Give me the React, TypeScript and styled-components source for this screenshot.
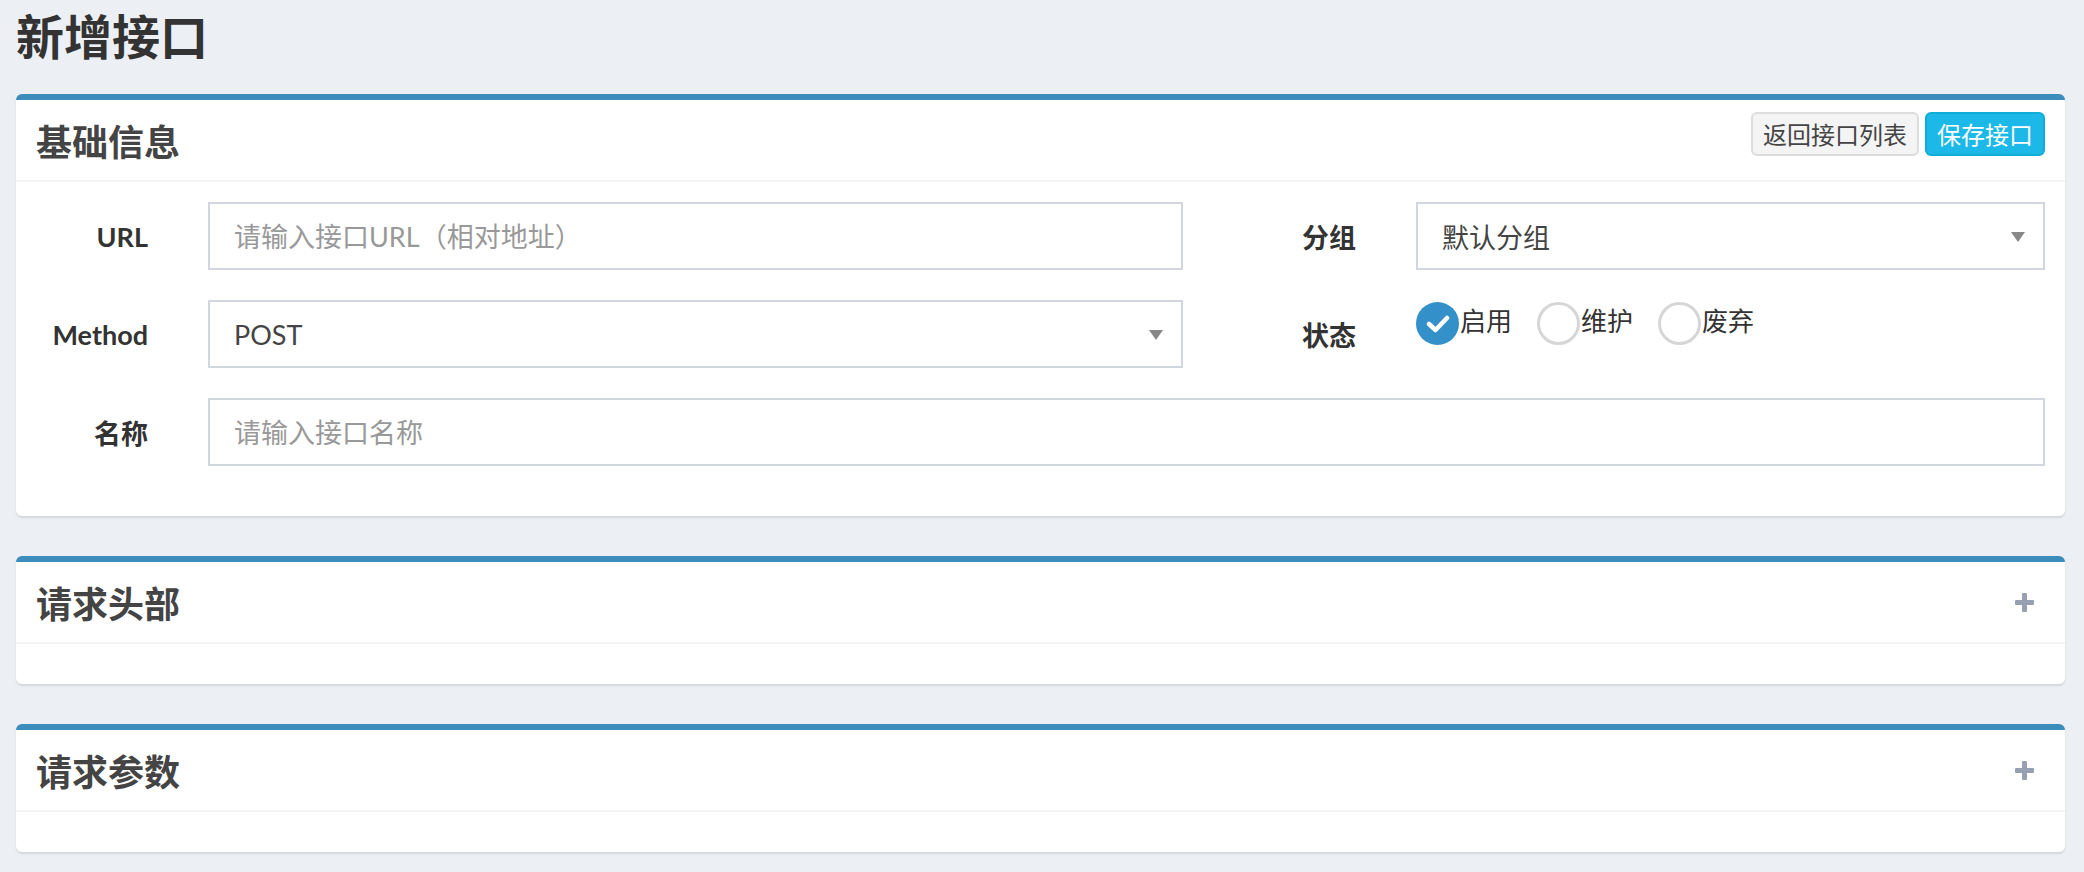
import React from "react";
import styled, { createGlobalStyle } from "styled-components";

const GlobalStyle = createGlobalStyle`
  html, body {
    margin: 0;
    padding: 0;
    background: #ecf0f5;
  }
  body {
    font-family: "Lato", "Noto Sans CJK SC", "Noto Sans", sans-serif;
    color: #333;
  }
  * { box-sizing: border-box; }
`;

const Page = styled.div`
  padding: 8px 19px 1px 16px;
  min-height: 872px;
  background: #ecf0f5;
`;

const PageTitle = styled.h1`
  margin: 0 0 33px;
  font-size: 48px;
  line-height: 53px;
  font-weight: 700;
  color: #333;
  font-family: "Noto Sans CJK SC", sans-serif;
`;

const Card = styled.section`
  background: #fff;
  border-top: 6px solid #3c8dbc;
  border-radius: 6px;
  box-shadow: 0 2px 2px rgba(0, 0, 0, 0.1);
  margin-bottom: 40px;
`;

const CardHeader = styled.div`
  display: flex;
  align-items: center;
  justify-content: space-between;
  height: 82px;
  padding: 0 20px;
  border-bottom: 2px solid #f4f4f4;
`;

const CardTitle = styled.h3`
  margin: 0;
  font-size: 36px;
  line-height: 1;
  font-weight: 700;
  color: #444;
  font-family: "Noto Sans CJK SC", sans-serif;
`;

const Tools = styled.div`
  display: flex;
  gap: 6px;
  align-self: flex-start;
  margin-top: 12px;
`;

const Button = styled.button<{ $variant?: "default" | "info" }>`
  height: 44px;
  padding: 0 10px;
  font-size: 24px;
  line-height: 1;
  font-family: "Noto Sans CJK SC", sans-serif;
  border-radius: 6px;
  border: 2px solid ${(p) => (p.$variant === "info" ? "#10acd8" : "#ddd")};
  background: ${(p) => (p.$variant === "info" ? "#1bb8e8" : "#f4f4f4")};
  color: ${(p) => (p.$variant === "info" ? "#fff" : "#444")};
  cursor: pointer;
`;

const PlusButton = styled.button`
  border: 0;
  background: transparent;
  padding: 0;
  margin-right: 11px;
  display: flex;
  align-items: center;
  cursor: pointer;
`;

const CardBody = styled.div<{ $form?: boolean }>`
  padding: ${(p) => (p.$form ? "20px 20px 50px 0" : "20px")};
  min-height: 40px;
`;

const FormGrid = styled.div`
  display: grid;
  grid-template-columns: 132px 975px 113px 1fr;
  column-gap: 60px;
  row-gap: 30px;
`;

const Label = styled.label`
  display: flex;
  align-items: center;
  justify-content: flex-end;
  height: 68px;
  font-size: 27px;
  font-weight: 700;
  color: #333;
  white-space: nowrap;
`;

const TextInput = styled.input<{ $span?: boolean }>`
  grid-column: ${(p) => (p.$span ? "2 / 5" : "auto")};
  width: 100%;
  height: 68px;
  border: 2px solid #d2d6de;
  border-radius: 0;
  padding: 0 24px;
  font-size: 27px;
  font-family: "Lato", "Noto Sans CJK SC", sans-serif;
  color: #555;
  outline: none;
  &::placeholder {
    color: #999;
  }
`;

const Select = styled.div`
  position: relative;
  display: flex;
  align-items: center;
  height: 68px;
  border: 2px solid #d2d6de;
  padding: 0 24px;
  font-size: 27px;
  color: #444;
`;

const Caret = styled.span`
  position: absolute;
  right: 18px;
  top: 50%;
  margin-top: -4px;
  width: 0;
  height: 0;
  border-style: solid;
  border-width: 10px 7px 0 7px;
  border-color: #888 transparent transparent transparent;
`;

const RadioGroup = styled.div`
  display: flex;
  align-items: flex-start;
  gap: 25px;
  padding-top: 2px;
`;

const RadioItem = styled.label`
  display: flex;
  align-items: flex-start;
  gap: 1px;
  font-size: 26px;
  line-height: 36px;
  color: #333;
  cursor: pointer;
  font-family: "Noto Sans CJK SC", sans-serif;
`;

const RadioCircle = styled.span<{ $checked?: boolean }>`
  display: flex;
  align-items: center;
  justify-content: center;
  width: 43px;
  height: 43px;
  border-radius: 50%;
  flex-shrink: 0;
  background: ${(p) => (p.$checked ? "#3390c8" : "#fff")};
  border: ${(p) => (p.$checked ? "none" : "3px solid #d6d6d6")};
`;

const Check = () => (
  <svg width="24" height="20" viewBox="0 0 24 20">
    <path
      d="M3 10 L9.5 16 L21 4"
      fill="none"
      stroke="#fff"
      strokeWidth="4.5"
      strokeLinecap="round"
      strokeLinejoin="round"
    />
  </svg>
);

const Plus = () => (
  <svg width="19" height="19" viewBox="0 0 19 19">
    <rect x="0" y="7" width="19" height="5" rx="1" fill="#97a0b3" />
    <rect x="7" y="0" width="5" height="19" rx="1" fill="#97a0b3" />
  </svg>
);

const statuses = [
  { label: "启用", checked: true },
  { label: "维护", checked: false },
  { label: "废弃", checked: false },
];

const CollapsedCard = ({ title }: { title: string }) => (
  <Card>
    <CardHeader>
      <CardTitle>{title}</CardTitle>
      <PlusButton aria-label="add">
        <Plus />
      </PlusButton>
    </CardHeader>
    <CardBody />
  </Card>
);

export default function App() {
  return (
    <>
      <GlobalStyle />
      <Page>
        <PageTitle>新增接口</PageTitle>
        <Card>
          <CardHeader>
            <CardTitle>基础信息</CardTitle>
            <Tools>
              <Button>返回接口列表</Button>
              <Button $variant="info">保存接口</Button>
            </Tools>
          </CardHeader>
          <CardBody $form>
            <FormGrid>
              <Label>URL</Label>
              <TextInput placeholder="请输入接口URL（相对地址）" />
              <Label>分组</Label>
              <Select>
                默认分组
                <Caret />
              </Select>

              <Label>Method</Label>
              <Select>
                POST
                <Caret />
              </Select>
              <Label>状态</Label>
              <RadioGroup>
                {statuses.map((s) => (
                  <RadioItem key={s.label}>
                    <RadioCircle $checked={s.checked}>{s.checked && <Check />}</RadioCircle>
                    {s.label}
                  </RadioItem>
                ))}
              </RadioGroup>

              <Label>名称</Label>
              <TextInput $span placeholder="请输入接口名称" />
            </FormGrid>
          </CardBody>
        </Card>
        <CollapsedCard title="请求头部" />
        <CollapsedCard title="请求参数" />
      </Page>
    </>
  );
}
